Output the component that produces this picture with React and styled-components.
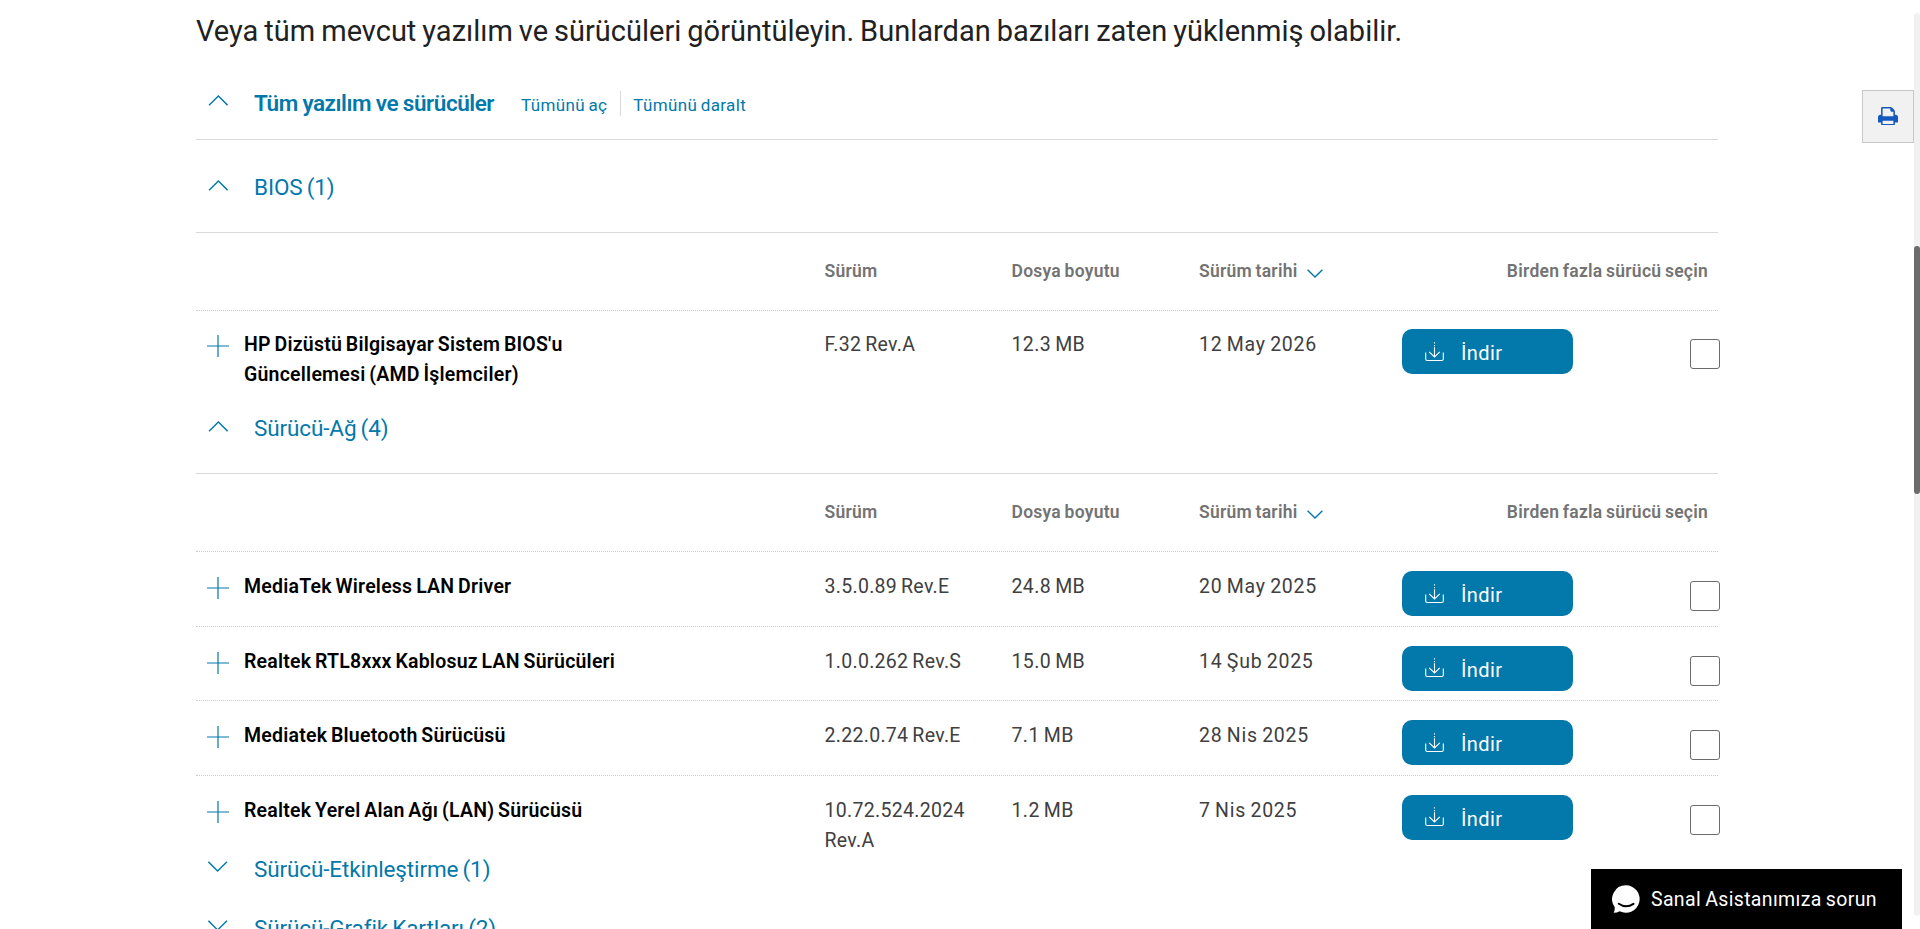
import styled, { createGlobalStyle } from 'styled-components'
import React from 'react'

const GlobalStyle = createGlobalStyle`
  * {
    box-sizing: border-box;
  }
  body {
    margin: 0;
    height: 929px;
    overflow: hidden;
    background: #fff;
    color: #404040;
    font-family: Roboto, "Liberation Sans", sans-serif;
  }
`

const Page = styled.main`
  width: 1522px;
  height: 929px;
  margin-left: 196px;
  padding-top: 13px;
`

const Heading = styled.h2`
  margin: 0;
  font-size: 29px;
  font-weight: 400;
  line-height: 36px;
  word-spacing: -1.2px;
  white-space: nowrap;
  color: #212121;
`

const AllHeader = styled.div`
  display: flex;
  align-items: center;
  height: 91px;
  padding: 17px 0 0 12px;
  margin-bottom: 10px;
  border-bottom: 1px solid #d9d9d9;
  color: #0278ab;
`

const ChevronSvg = styled.svg`
  display: block;
  flex: none;
  margin: 0 26px 4px 0;
  transform: ${props => (props.$down ? 'rotate(180deg)' : 'none')};
`

const AllTitle = styled.h3`
  margin: 0 27px 0 0;
  font-size: 22.5px;
  font-weight: 600;
  line-height: 30px;
  letter-spacing: -0.44px;
  word-spacing: -0.5px;
`

const Links = styled.div`
  display: flex;
  padding-top: 2px;
`

const TextLink = styled.a`
  height: 25px;
  padding: 2px 13px 0 0;
  font-size: 17px;
  line-height: 25px;
  letter-spacing: 0.35px;
  word-spacing: -1px;
  cursor: pointer;

  & + & {
    padding-left: 12px;
    border-left: 1px solid #d9d9d9;
  }
`

const SectionHeader = styled.div`
  display: flex;
  align-items: center;
  height: ${props => (props.$open ? 83 : 59)}px;
  padding: ${props => (props.$open ? '22px 0 30px 12px' : '7px 0 22px 12px')};
  border-bottom: ${props => (props.$open ? '1px solid #d9d9d9' : 'none')};
  color: #0278ab;
`

const SectionTitle = styled.h4`
  margin: 0;
  font-size: 22.5px;
  font-weight: 400;
  line-height: 30px;
  letter-spacing: -0.12px;
  word-spacing: -1.3px;
`

const Grid = styled.div`
  display: grid;
  grid-template-columns: 628.5px 187px 187.5px 203px 1fr;
`

const TableHead = styled(Grid)`
  align-items: center;
  height: 78px;
  padding-bottom: 1px;
  border-bottom: 1px dotted #ccc;
  color: #737373;
  font-size: 17.5px;
  font-weight: 600;
  line-height: 30px;
  letter-spacing: 0.25px;
  word-spacing: -1px;
`

const SortLabel = styled.div`
  display: flex;
  align-items: center;
  white-space: nowrap;
  grid-column: 4;

  svg {
    margin: 4px 0 0 9px;
  }
`

const SelectLabel = styled.div`
  padding-right: 10px;
  text-align: right;
`

const Row = styled(Grid)`
  height: ${props => (props.$single ? 80 : 74.67)}px;
  padding-top: ${props => (props.$single ? 18 : 19)}px;
  border-bottom: ${props => (props.$single ? 'none' : '1px dotted #ccc')};
  font-size: 19.5px;
  line-height: 30px;

  &:last-child {
    border-bottom: none;
  }
  &:last-child:not(:nth-child(3)) {
    height: 71px;
  }
`

const Name = styled.div`
  display: flex;
  align-items: flex-start;
  padding-left: 11px;
  color: #000;
  font-weight: 600;
  letter-spacing: 0.22px;
  word-spacing: -1.3px;

  svg {
    flex: none;
    margin: 6px 15px 0 0;
  }
  span {
    max-width: 385px;
    padding-top: 1px;
  }
`

const Cell = styled.div`
  padding: 1px 35px 0 0;
  letter-spacing: ${props => props.$tracking}px;
  word-spacing: -1.2px;
  white-space: ${props => (props.$wrap ? 'normal' : 'nowrap')};
`

const Actions = styled.div`
  display: flex;
  align-items: flex-start;
  justify-content: space-between;
  margin-right: -2px;
`

const DownloadButton = styled.button`
  display: flex;
  align-items: center;
  width: 171px;
  height: 45px;
  padding: 0 0 0 23px;
  border: 0;
  border-radius: 10px;
  background: #0278ab;
  color: #fff;
  font: 400 20px/30px Roboto, "Liberation Sans", sans-serif;
  letter-spacing: 0.4px;

  span {
    padding: 3px 0 0 16px;
  }
`

const Checkbox = styled.input`
  appearance: none;
  width: 30px;
  height: 30px;
  margin: 10px 0 0;
  border: 1px solid #6b6b6b;
  border-radius: 3px;
  background: #fff;
`

const PrintButton = styled.button`
  position: fixed;
  top: 90px;
  right: 6px;
  display: flex;
  align-items: center;
  justify-content: center;
  width: 52px;
  height: 53px;
  padding: 0 0 1px;
  border: 1px solid #c8c8c8;
  background: #f1f1f1;
  color: #1459bc;
`

const ScrollTrack = styled.div`
  position: fixed;
  top: 13px;
  right: 0;
  width: 6px;
  height: 903px;
  padding-top: 233px;
  border-radius: 3px;
  background: #f1f1f1;
`

const ScrollThumb = styled.div`
  height: 248px;
  border-radius: 3px;
  background: #6b6b6b;
`

const ChatButton = styled.button`
  position: fixed;
  right: 18px;
  bottom: 0;
  display: flex;
  align-items: center;
  width: 311px;
  height: 60px;
  padding: 0 0 0 21px;
  border: 0;
  background: #000;
  color: #fff;
  font: 400 19.5px/30px Roboto, "Liberation Sans", sans-serif;
  letter-spacing: 0.34px;
  word-spacing: -1px;
  white-space: nowrap;

  span {
    padding: 1px 0 0 11px;
  }
`

const Chevron = ({ down }) => (
  <ChevronSvg $down={down} width="20" height="11" viewBox="0 0 20 11" fill="none" stroke="#0278ab" strokeWidth="1.4">
    <path d="M1 10.2 10.4 1l9.2 9.2" />
  </ChevronSvg>
)

const SortIcon = () => (
  <svg width="16" height="9" viewBox="0 0 16 9" fill="none" stroke="#0278ab" strokeWidth="1.4">
    <path d="M.6.7 8 8 15.4.7" />
  </svg>
)

const PlusIcon = () => (
  <svg width="22" height="22" viewBox="0 0 22 22" fill="none" stroke="#0278ab" strokeWidth="1.2">
    <path d="M11 0v22M0 11h22" />
  </svg>
)

const DownloadIcon = () => (
  <svg width="20" height="20" viewBox="0 0 20 20" fill="none" stroke="#fff" strokeWidth="1.1">
    <path d="M.7 10.5V17q0 1.500 1.500 1.500h14.600q1.500 0 1.500-1.500v-6.500" />
    <path d="M4.200 9.800l5.300 5.200 5.300-5.200M9.500 5.300v9.500M9.500.3v1.200M9.500 3v1.200" />
  </svg>
)

const PrintIcon = () => (
  <svg width="20" height="18.5" viewBox="0 128 1664 1536" fill="currentColor">
    <path d="M384 1536h896v-256h-896v256zM384 896h896v-384h-160q-40 0-68-28t-28-68v-160h-640v640zM1664 960v416q0 13-9.500 22.500t-22.500 9.500h-224v160q0 40-28 68t-68 28h-960q-40 0-68-28t-28-68v-160h-224q-13 0-22.500-9.500t-9.500-22.500v-416q0-79 56.500-135.500t135.500-56.500h64v-544q0-40 28-68t68-28h672q40 0 88 20t76 48l152 152q28 28 48 76t20 88v256h64q79 0 135.500 56.500t56.500 135.500z" />
  </svg>
)

const ChatIcon = () => (
  <svg width="28" height="28" viewBox="0 0 28 28">
    <path fill="#fff" d="M14 .3a13.700 13.700 0 1 1-6.300 25.900Q5 27.800 1.600 27.800 3 25.500 2.700 22A13.700 13.700 0 0 1 14 .3Z" />
    <path fill="none" stroke="#000" strokeWidth="2" strokeLinecap="round" d="M6.800 18.700q7.200 5.100 14.700.1" />
  </svg>
)

const sections = [
  {
    title: 'BIOS (1)',
    rows: [
      { name: "HP Dizüstü Bilgisayar Sistem BIOS'u Güncellemesi (AMD İşlemciler)", version: 'F.32 Rev.A', size: '12.3 MB', date: '12 May 2026' },
    ],
  },
  {
    title: 'Sürücü-Ağ (4)',
    rows: [
      { name: 'MediaTek Wireless LAN Driver', version: '3.5.0.89 Rev.E', size: '24.8 MB', date: '20 May 2025' },
      { name: 'Realtek RTL8xxx Kablosuz LAN Sürücüleri', version: '1.0.0.262 Rev.S', size: '15.0 MB', date: '14 Şub 2025' },
      { name: 'Mediatek Bluetooth Sürücüsü', version: '2.22.0.74 Rev.E', size: '7.1 MB', date: '28 Nis 2025' },
      { name: 'Realtek Yerel Alan Ağı (LAN) Sürücüsü', version: '10.72.524.2024 Rev.A', size: '1.2 MB', date: '7 Nis 2025' },
    ],
  },
  { title: 'Sürücü-Etkinleştirme (1)' },
  { title: 'Sürücü-Grafik Kartları (2)' },
]

function DriverRow({ row, single }) {
  return (
    <Row $single={single}>
      <Name>
        <PlusIcon />
        <span>{row.name}</span>
      </Name>
      <Cell $wrap $tracking={0.3}>{row.version}</Cell>
      <Cell $tracking={0.4}>{row.size}</Cell>
      <Cell $tracking={0.75}>{row.date}</Cell>
      <Actions>
        <DownloadButton>
          <DownloadIcon />
          <span>İndir</span>
        </DownloadButton>
        <Checkbox type="checkbox" />
      </Actions>
    </Row>
  )
}

function Section({ title, rows }) {
  return (
    <section>
      <SectionHeader $open={!!rows}>
        <Chevron down={!rows} />
        <SectionTitle>{title}</SectionTitle>
      </SectionHeader>
      {
        rows &&
        <TableHead>
          <div />
          <div>Sürüm</div>
          <div>Dosya boyutu</div>
          <SortLabel>
            Sürüm tarihi
            <SortIcon />
          </SortLabel>
          <SelectLabel>Birden fazla sürücü seçin</SelectLabel>
        </TableHead>
      }
      {rows && rows.map(row => <DriverRow key={row.name} row={row} single={rows.length === 1} />)}
    </section>
  )
}

export default function App() {
  return (
    <>
      <GlobalStyle />
      <Page>
        <Heading>Veya tüm mevcut yazılım ve sürücüleri görüntüleyin. Bunlardan bazıları zaten yüklenmiş olabilir.</Heading>
        <AllHeader>
          <Chevron />
          <AllTitle>Tüm yazılım ve sürücüler</AllTitle>
          <Links>
            <TextLink>Tümünü aç</TextLink>
            <TextLink>Tümünü daralt</TextLink>
          </Links>
        </AllHeader>
        {sections.map(section => <Section key={section.title} {...section} />)}
      </Page>
      <PrintButton aria-label="Yazdır">
        <PrintIcon />
      </PrintButton>
      <ScrollTrack>
        <ScrollThumb />
      </ScrollTrack>
      <ChatButton>
        <ChatIcon />
        <span>Sanal Asistanımıza sorun</span>
      </ChatButton>
    </>
  )
}
